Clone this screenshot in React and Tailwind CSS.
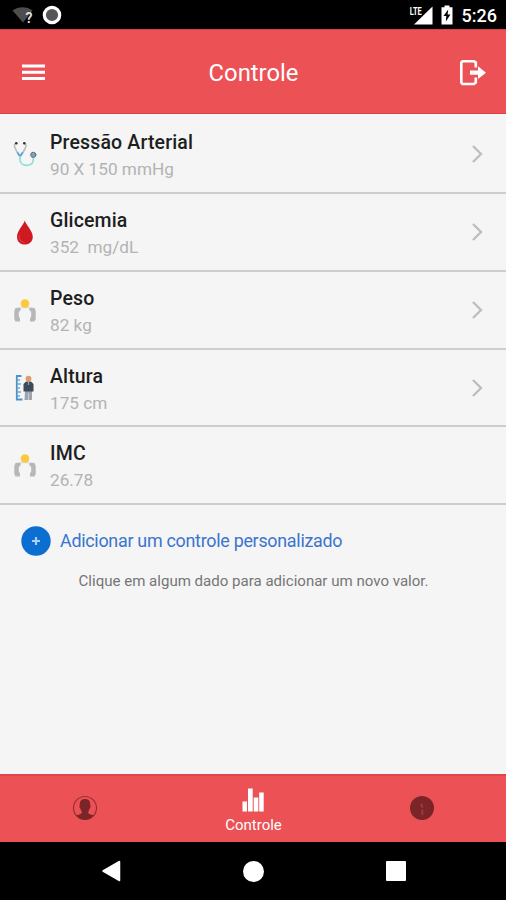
const MEASURES = [
  { id: 'pressure', icon: StethoscopeIcon, title: 'Pressão Arterial', value: '90 X 150 mmHg', link: true },
  { id: 'glucose',  icon: DropIcon,        title: 'Glicemia',         value: '352  mg/dL',    link: true },
  { id: 'weight',   icon: ScaleIcon,       title: 'Peso',             value: '82 kg',         link: true },
  { id: 'height',   icon: HeightIcon,      title: 'Altura',           value: '175 cm',        link: true },
  { id: 'bmi',      icon: ScaleIcon,       title: 'IMC',              value: '26.78',         link: false },
];

// ── Row icons ───────────────────────────────────────────────────────────────
function StethoscopeIcon() {
  return (
    <svg width="26" height="30" viewBox="0 0 26 30" fill="none" strokeLinecap="round">
      <path d="M3.800 4.500C1.500 5 2.500 8 3.800 10.500C5 13.500 6.500 15 8 17" stroke="#b4bcc4" strokeWidth="1.600" />
      <path d="M12.200 4.500C15 5 14 8 12.600 10.500C11.200 13 10 15 8.300 17" stroke="#b4bcc4" strokeWidth="1.600" />
      <path d="M5.800 14L8.100 17.500L10.300 14" stroke="#5fa8dc" strokeWidth="1.900" />
      <path d="M8 17.500V20.500C8 28.300 21.300 28.300 21.300 21V18.500" stroke="#8ddfd8" strokeWidth="1.700" />
      <circle cx="4.300" cy="4.300" r="1.300" fill="#2f3338" />
      <circle cx="12.300" cy="4.300" r="1.300" fill="#2f3338" />
      <circle cx="21.300" cy="15.800" r="2.600" fill="#8aa0b0" stroke="#5d7284" strokeWidth="1" />
    </svg>
  );
}

function DropIcon() {
  return (
    <svg width="26" height="30" viewBox="0 0 26 30">
      <path d="M12.800 3.500C13.500 7.500 20.800 13.500 20.800 20C20.800 24.500 17 27.600 12.800 27.600S5 24.500 5 20C5 13.500 12 7.500 12.800 3.500Z" fill="#cf1a22" />
      <path d="M7.500 18C6.500 22 9 25.300 12.500 25.500" stroke="#dd3a40" strokeWidth="1.200" fill="none" />
    </svg>
  );
}

function ScaleIcon() {
  return (
    <svg className="relative top-px" width="26" height="30" viewBox="0 0 26 30">
      <path d="M2.300 15L3.500 12L8.500 11.500L8.800 14L6.800 16V20.500L8 22.500V25.500H3.500L2.300 23Z" fill="#b5b7b9" />
      <path d="M23.700 15L22.500 12L17.500 11.500L17.200 14L19.200 16V20.500L18 22.500V25.500H22.500L23.700 23Z" fill="#b5b7b9" />
      <path d="M9 11.300H17" stroke="#dde0e2" strokeWidth="2" />
      <circle cx="13" cy="7.500" r="4.300" fill="#fdc83e" />
    </svg>
  );
}

function HeightIcon() {
  return (
    <svg width="26" height="30" viewBox="0 0 26 30">
      <path d="M9.500 3H4.800V26.500H10.500" fill="none" stroke="#4d93c6" strokeWidth="1.800" />
      <path d="M5 7H8M5 11H9M5 15H8M5 19H9M5 23H8" stroke="#6ca9d4" strokeWidth="1.300" />
      <path d="M13 18H20V27H12.500Z" fill="#9da4ad" />
      <path d="M16.500 20V27" stroke="#c9ced4" strokeWidth="1" />
      <path d="M14 8.500H19L21.500 11V18.500H11.500V11Z" fill="#3d4c5c" />
      <path d="M16.500 8.500V12" stroke="#8ea3b4" strokeWidth="1.200" />
      <circle cx="16.500" cy="5.600" r="2.900" fill="#e39a63" />
    </svg>
  );
}

// ── Bars ────────────────────────────────────────────────────────────────────
function StatusBar() {
  return (
    <div className="flex h-[29px] shrink-0 items-center justify-between bg-black pt-px pr-[9px] pl-3 text-white">
      <div className="flex items-center gap-[8px]">
        <svg width="22" height="20" viewBox="0 0 22 20">
          <path d="M0.500 5.500C6 1 15 1 20.500 5.500L17 10L11 17.500Z" fill="#4d4d4d" />
          <text x="13.500" y="17.500" fontFamily="Roboto" fontWeight="700" fontSize="14" fill="#ddd">?</text>
        </svg>
        <svg width="20" height="20" viewBox="0 0 20 20">
          <circle cx="10" cy="10" r="7.700" fill="#565656" stroke="#fff" strokeWidth="3.200" />
        </svg>
      </div>
      <div className="flex items-center">
        <svg width="24" height="20" viewBox="0 0 24 20">
          <path d="M5 19.500L23.500 1.500V19.500Z" fill="#fff" />
          <text x="0.800" y="10" fontFamily="Roboto" fontWeight="700" fontSize="11" textLength="12" lengthAdjust="spacingAndGlyphs" fill="#fff" stroke="#000" strokeWidth="1.500" paintOrder="stroke">LTE</text>
        </svg>
        <svg className="ml-[8px]" width="12" height="20" viewBox="0 0 12 20">
          <path d="M3.500 0.500H8.500V2.300H11.500V19.500H0.500V2.300H3.500Z" fill="#fff" />
          <path d="M7.200 4.500L2.500 11H5.300L4.800 16.500L9.500 9.500H6.600Z" fill="#000" />
        </svg>
        <span className="ml-[9px] pt-px text-[18px] leading-none font-medium">5:26</span>
      </div>
    </div>
  );
}

function Header() {
  return (
    <header className="flex h-[85px] shrink-0 items-center justify-between border-y border-[#dc3f47] bg-[#ec5156] pt-[3px] pr-5 pl-[22px] text-white">
      <svg width="26" height="28" viewBox="0 0 26 28">
        <path d="M0 7H23M0 13.200H23M0 19.500H23" stroke="#fff" strokeWidth="3" />
      </svg>
      <h1 className="pt-px pr-px text-[23.8px] leading-none">Controle</h1>
      <svg width="26" height="28" viewBox="0 0 26 28">
        <path d="M15.800 8.500V3.500L14 2.300H2.500L1.300 3.500V23.500L2.500 25H14L15.800 23.500V18.500" fill="none" stroke="#fff" strokeWidth="2.600" />
        <path d="M10 11.500H18V7.300L26 13.700L18 20V15.800H10Z" fill="#fff" />
      </svg>
    </header>
  );
}

function MeasureRow({ icon: Icon, title, value, link }) {
  return (
    <li className="flex h-[77.7px] items-center border-b-2 border-[#cdcdcd] pr-[22px] pl-3">
      <Icon />
      <div className="ml-3 flex-1 pt-[5px]">
        <p className="text-[19.5px] leading-[26px] font-medium tracking-[0.15px] text-[#1c1e21]">{title}</p>
        <p className="text-[17.2px] leading-[27px] whitespace-pre text-[#b3b3b3]">{value}</p>
      </div>
      {link && (
        <svg width="14" height="20" viewBox="0 0 14 20">
          <path d="M3 2L11 10L3 18" fill="none" stroke="#bdbec0" strokeWidth="2.400" />
        </svg>
      )}
    </li>
  );
}

function TabBar() {
  return (
    <nav className="grid h-[68px] shrink-0 grid-cols-3 border-t-2 border-[#e3434b] bg-[#ec5156]">
      <div className="flex items-center justify-center pb-[2px] pl-px">
        <svg width="26" height="26" viewBox="0 0 26 26">
          <circle cx="13" cy="13" r="11.500" fill="none" stroke="#973036" strokeWidth="1.200" />
          <path d="M13 4C17 4 18.500 6.500 18.200 10C19 10.500 18.500 13 17.700 13.500C17.300 15 16.500 16 16.200 17C16.200 19 18 19.500 22 20.300C17 26.500 9 26.500 4 20.300C8 19.500 9.800 19 9.800 17C9.500 16 8.700 15 8.300 13.500C7.500 13 7 10.500 7.800 10C7.500 6.500 9 4 13 4Z" fill="#7c2529" />
        </svg>
      </div>
      <div className="flex flex-col items-center pt-[12px] text-white">
        <svg width="22" height="24" viewBox="0 0 22 24">
          <path d="M0.500 13.500H5V23.500H0.500ZM6 0.500H10.700V23.500H6ZM11.700 9.500H16.300V23.500H11.700ZM17.200 4.500H21.700V23.500H17.200Z" fill="#fff" />
        </svg>
        <span className="mt-[6px] pl-px text-[15px] leading-[14px]">Controle</span>
      </div>
      <div className="flex items-center justify-center pb-[2px] pl-px">
        <svg width="26" height="26" viewBox="0 0 26 26">
          <circle cx="13" cy="13" r="12" fill="#7c2529" />
          <path d="M12 9L13.700 12.500M13.300 14.500V20" stroke="#a03c41" strokeWidth="1.800" fill="none" />
        </svg>
      </div>
    </nav>
  );
}

function SystemNav() {
  return (
    <div className="flex h-[58px] shrink-0 items-center justify-between bg-black pr-[100px] pl-[101px]">
      <svg width="20" height="22" viewBox="0 0 20 22">
        <path d="M18.500 1.500V20.500L2 11Z" fill="#fff" stroke="#fff" strokeWidth="1.500" strokeLinejoin="round" />
      </svg>
      <div className="size-[21px] rounded-full bg-white" />
      <div className="size-[20px] rounded-[1px] bg-white" />
    </div>
  );
}

export default function App() {
  return (
    <div className="flex h-[900px] w-[506px] flex-col overflow-hidden bg-[#f5f5f5] font-['Roboto',sans-serif]">
      <StatusBar />
      <Header />

      <main className="flex-1 pt-[2.6px]">
        <ul>
          {MEASURES.map(m => <MeasureRow key={m.id} {...m} />)}
        </ul>

        {/* Add custom measure */}
        <button className="mt-[20px] ml-[21px] flex items-center">
          <svg width="30" height="30" viewBox="0 0 30 30">
            <circle cx="15" cy="15" r="14.700" fill="#0a6fd0" />
            <path d="M15 11V19M11 15H19" stroke="#a9d0f2" strokeWidth="2.200" />
          </svg>
          <span className="ml-[9px] pt-px text-[17.9px] leading-[30px] tracking-[-0.28px] text-[#3b74cf]">Adicionar um controle personalizado</span>
        </button>
        <p className="mt-[15px] pl-px text-center text-[15.05px] leading-5 text-[#757575]">
          Clique em algum dado para adicionar um novo valor.
        </p>
      </main>

      <TabBar />
      <SystemNav />
    </div>
  );
}
